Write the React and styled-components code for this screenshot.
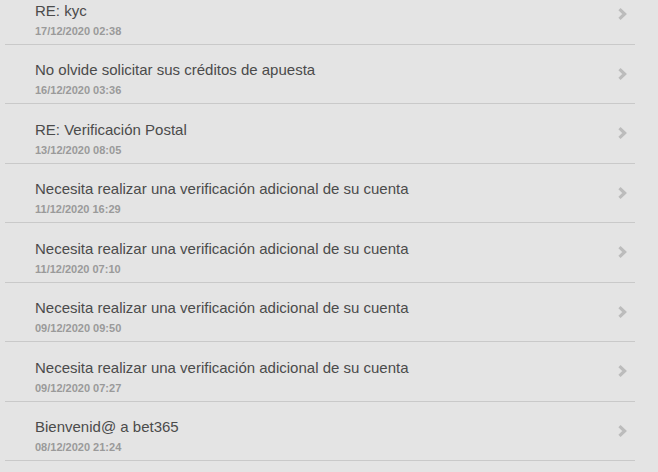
import React from 'react';
import styled, { createGlobalStyle } from 'styled-components';

const GlobalStyle = createGlobalStyle`
  html, body {
    margin: 0;
    padding: 0;
    background: #e4e4e4;
    font-family: Arial, "Liberation Sans", sans-serif;
    overflow: hidden;
  }
`;

const List = styled.ul`
  list-style: none;
  margin: -15px 0 0 5px;
  padding: 0;
  width: 630px;
`;

const Item = styled.li`
  display: flex;
  align-items: center;
  height: 58.5px;
  border-bottom: 1px solid #c9c9c9;
  padding: 0 8px 0 30px;
  box-sizing: content-box;
  cursor: pointer;
`;

const Body = styled.div`
  flex: 1;
  align-self: flex-start;
  display: flex;
  flex-direction: column;
  padding-top: 15.5px;
`;

const Subject = styled.div`
  font-size: 15px;
  line-height: 20px;
  color: #4b4b4b;
`;

const Date = styled.div`
  font-size: 11px;
  line-height: 14px;
  font-weight: bold;
  color: #9a9a9a;
  margin-top: 3px;
`;

const Chevron = styled.svg`
  width: 9px;
  height: 12px;
  flex: none;
`;

const messages = [
  { subject: 'RE: kyc', date: '17/12/2020 02:38' },
  { subject: 'No olvide solicitar sus créditos de apuesta', date: '16/12/2020 03:36' },
  { subject: 'RE: Verificación Postal', date: '13/12/2020 08:05' },
  { subject: 'Necesita realizar una verificación adicional de su cuenta', date: '11/12/2020 16:29' },
  { subject: 'Necesita realizar una verificación adicional de su cuenta', date: '11/12/2020 07:10' },
  { subject: 'Necesita realizar una verificación adicional de su cuenta', date: '09/12/2020 09:50' },
  { subject: 'Necesita realizar una verificación adicional de su cuenta', date: '09/12/2020 07:27' },
  { subject: 'Bienvenid@ a bet365', date: '08/12/2020 21:24' },
];

export default function App() {
  return (
    <>
      <GlobalStyle />
      <List>
        {messages.map((m, i) => (
          <Item key={i}>
            <Body>
              <Subject>{m.subject}</Subject>
              <Date>{m.date}</Date>
            </Body>
            <Chevron viewBox="0 0 9 12">
              <path d="M1.5 1.2 L6.6 6 L1.5 10.8" fill="none" stroke="#bcbcbc" strokeWidth="3.2" />
            </Chevron>
          </Item>
        ))}
      </List>
    </>
  );
}
